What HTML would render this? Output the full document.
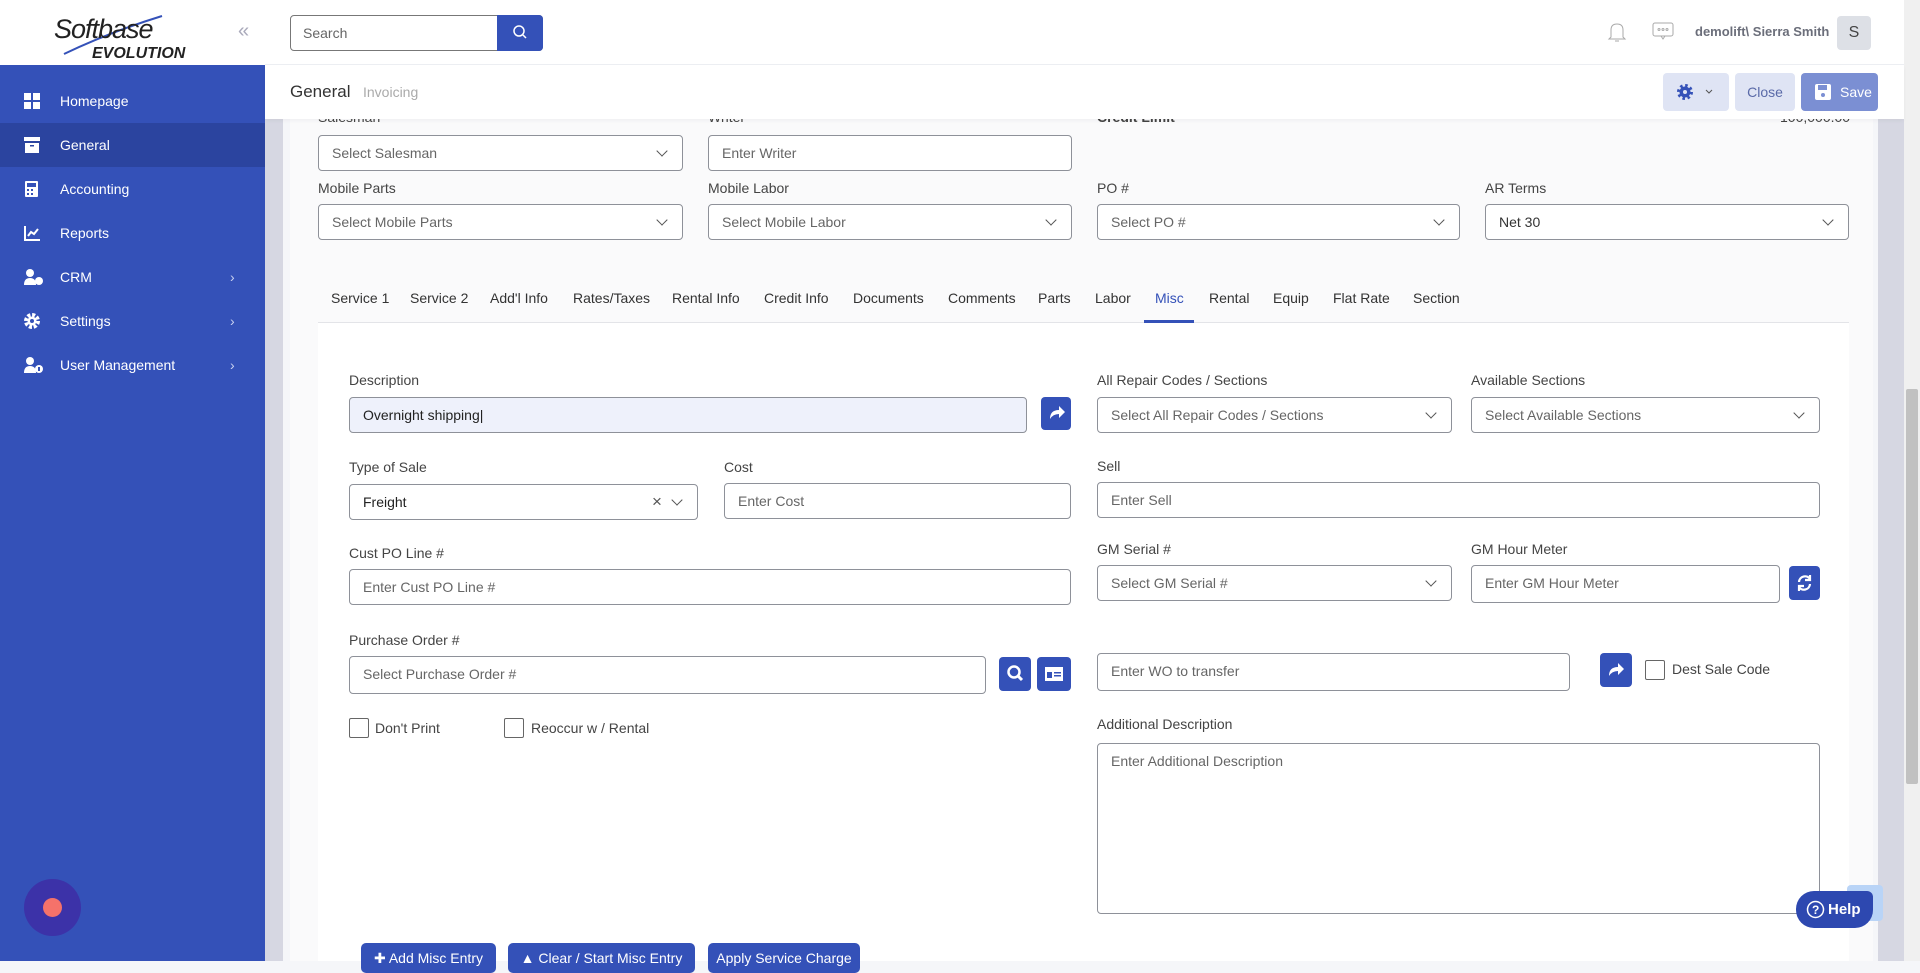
<!DOCTYPE html>
<html><head><meta charset="utf-8">
<style>
*{box-sizing:border-box;margin:0;padding:0}
body{width:1920px;height:961px;overflow:hidden;font-family:"Liberation Sans",sans-serif;background:#f5f6f9;position:relative;color:#3a3d45}
.a{position:absolute}
.side{left:0;top:0;width:265px;height:961px;background:#3451b8}
.logo{left:0;top:0;width:265px;height:65px;background:#fff}
.mi{position:absolute;left:0;width:265px;height:44px;color:#fff;font-size:14px;line-height:44px;padding-left:60px}
.mi svg{position:absolute;left:24px;top:14px}
.mi .ch{position:absolute;left:230px;top:0;font-size:14px;color:#c9d1f0}
.hdr{left:265px;top:0;width:1639px;height:65px;background:#fff;border-bottom:1px solid #eceef3}
.sub{left:265px;top:65px;width:1639px;height:54px;background:#fff;box-shadow:0 2px 4px rgba(0,0,0,.04);z-index:3}
.lab{position:absolute;font-size:14px;color:#444;white-space:nowrap}
.in{position:absolute;height:36px;border:1px solid #8e9199;border-radius:4px;background:#fff;font-size:14px;color:#666;line-height:34px;padding-left:13px;white-space:nowrap}
.sel::after{content:"";position:absolute;right:16px;top:11px;width:7px;height:7px;border-right:1.4px solid #555;border-bottom:1.4px solid #555;transform:rotate(45deg)}
.bb{position:absolute;background:#3451b8;border-radius:4px}
.tab{position:absolute;top:290px;font-size:14px;color:#333;white-space:nowrap}
.cb{position:absolute;width:20px;height:20px;border:1px solid #666;border-radius:2px;background:#fff}
.btn{position:absolute;top:943px;height:30px;background:#3451b8;border-radius:5px;color:#fff;font-size:14px;line-height:30px;text-align:center;white-space:nowrap}
</style></head><body>
<div class="a side"></div>
<div class="a logo">
 <svg class="a" style="left:50px;top:8px" width="160" height="52" viewBox="0 0 160 52">
  <path d="M14 46 Q60 24 112 8" stroke="#3451b8" stroke-width="2" fill="none"/>
  <text x="4" y="30" font-family="Liberation Sans" font-style="italic" font-size="27" fill="#222" letter-spacing="-1">Softbase</text>
  <text x="42" y="50" font-family="Liberation Sans" font-style="italic" font-weight="bold" font-size="16" fill="#222">EVOLUTION</text>
 </svg>
 <div class="a" style="left:238px;top:20px;font-size:20px;color:#aab">«</div>
</div>
<div class="mi" style="top:79px"><svg width="16" height="16"><rect x="0" y="0" width="7" height="7" fill="#fff"/><rect x="9" y="0" width="7" height="7" fill="#fff"/><rect x="0" y="9" width="7" height="7" fill="#fff"/><rect x="9" y="9" width="7" height="7" fill="#fff"/></svg>Homepage</div>
<div class="mi" style="top:123px;background:#2b449f"><svg width="16" height="16"><rect x="0" y="0" width="16" height="4" fill="#fff"/><rect x="1" y="6" width="14" height="10" fill="#fff"/><rect x="6" y="8" width="4" height="1.5" fill="#2b449f"/></svg>General</div>
<div class="mi" style="top:167px"><svg width="16" height="16"><rect x="1" y="0" width="13" height="16" rx="1" fill="#fff"/><rect x="3" y="2" width="9" height="4" fill="#3451b8"/><rect x="3" y="8" width="2" height="2" fill="#3451b8"/><rect x="7" y="8" width="2" height="2" fill="#3451b8"/><rect x="3" y="12" width="2" height="2" fill="#3451b8"/><rect x="7" y="12" width="2" height="2" fill="#3451b8"/></svg>Accounting</div>
<div class="mi" style="top:211px"><svg width="16" height="16"><path d="M1 1V15H16" stroke="#fff" stroke-width="2" fill="none"/><path d="M4 11L7 7L10 9L14 4" stroke="#fff" stroke-width="2" fill="none"/></svg>Reports</div>
<div class="mi" style="top:255px"><svg width="20" height="16"><circle cx="6" cy="4" r="4" fill="#fff"/><path d="M0 16Q0 9 6 9Q12 9 12 16Z" fill="#fff"/><circle cx="15" cy="12" r="4" fill="#fff"/></svg>CRM<span class="ch">›</span></div>
<div class="mi" style="top:299px"><svg width="16" height="16"><circle cx="8" cy="8" r="6" fill="none" stroke="#fff" stroke-width="4" stroke-dasharray="3 1.7"/><circle cx="8" cy="8" r="4.5" fill="#fff"/><circle cx="8" cy="8" r="2" fill="#3451b8"/></svg>Settings<span class="ch">›</span></div>
<div class="mi" style="top:343px"><svg width="20" height="16"><circle cx="6" cy="4" r="4" fill="#fff"/><path d="M0 16Q0 9 6 9Q12 9 12 16Z" fill="#fff"/><circle cx="15" cy="12" r="4" fill="#fff"/><rect x="14" y="10" width="2" height="4" fill="#3451b8"/></svg>User Management<span class="ch">›</span></div>
<div class="a" style="left:24px;top:879px;width:57px;height:57px;border-radius:50%;background:#3c32a8"></div>
<div class="a" style="left:43px;top:898px;width:19px;height:19px;border-radius:50%;background:#f5726a"></div>

<div class="a hdr">
 <div class="a" style="left:25px;top:15px;width:253px;height:36px;border:1px solid #777;border-radius:4px;font-size:14px;color:#666;line-height:34px;padding-left:12px">Search</div>
 <div class="a" style="left:232px;top:15px;width:46px;height:36px;background:#3451b8;border-radius:0 4px 4px 0"><svg width="46" height="36"><circle cx="22" cy="16" r="5" stroke="#fff" stroke-width="1.5" fill="none"/><path d="M26 20L29 23" stroke="#fff" stroke-width="1.5"/></svg></div>
 <svg class="a" style="left:1340px;top:20px" width="24" height="24"><path d="M6 17V10Q6 4 12 4Q18 4 18 10V17L20 19H4Z" stroke="#aaa" fill="none"/><path d="M10 21H14" stroke="#aaa"/></svg>
 <svg class="a" style="left:1387px;top:22px" width="22" height="20"><rect x="1" y="1" width="20" height="13" rx="2" stroke="#aaa" fill="none"/><path d="M9 14L11 17L13 14" stroke="#aaa" fill="none"/><circle cx="7" cy="7.5" r="1" stroke="#aaa" fill="none"/><circle cx="11" cy="7.5" r="1" stroke="#aaa" fill="none"/><circle cx="15" cy="7.5" r="1" stroke="#aaa" fill="none"/></svg>
 <div class="a" style="left:1430px;top:24px;font-size:13px;font-weight:bold;color:#6b6e7a;white-space:nowrap">demolift\ Sierra Smith</div>
 <div class="a" style="left:1572px;top:16px;width:34px;height:34px;background:#dde0e6;border-radius:4px;text-align:center;line-height:34px;font-size:16px;color:#444">S</div>
</div>
<div class="a sub">
 <div class="a" style="left:25px;top:17px;font-size:17px;color:#333">General</div>
 <div class="a" style="left:98px;top:19px;font-size:14px;color:#aaa">Invoicing</div>
 <div class="a" style="left:1398px;top:8px;width:66px;height:38px;background:#dfe4f4;border-radius:4px"><svg width="66" height="38"><circle cx="22" cy="19" r="6.5" fill="none" stroke="#3451b8" stroke-width="3" stroke-dasharray="2.5 2.6"/><circle cx="22" cy="19" r="5.5" fill="#3451b8"/><circle cx="22" cy="19" r="2" fill="#dfe4f4"/><path d="M43 17L46 20L49 17" stroke="#555" fill="none"/></svg></div>
 <div class="a" style="left:1470px;top:8px;width:60px;height:38px;background:#dfe4f4;border-radius:4px;text-align:center;line-height:38px;font-size:14px;color:#5a6aa8">Close</div>
 <div class="a" style="left:1536px;top:8px;width:77px;height:38px;background:#7b8fd3;border-radius:4px;color:#fff;font-size:14px;line-height:38px;padding-left:39px;white-space:nowrap">Save<svg class="a" style="left:14px;top:11px" width="16" height="16"><rect x="0" y="0" width="16" height="16" rx="2" fill="#fff"/><rect x="3" y="1" width="9" height="5" fill="#7b8fd3"/><circle cx="8" cy="11" r="2" fill="#7b8fd3"/></svg></div>
</div>

<!-- content -->
<div class="a" style="left:265px;top:119px;width:18px;height:842px;background:#d6d7e2"></div>
<div class="a" style="left:1878px;top:119px;width:26px;height:842px;background:#d6d7e2"></div>
<div class="a" style="left:1904px;top:0;width:16px;height:961px;background:#f0f0f0"></div>
<div class="a" style="left:1906px;top:389px;width:12px;height:395px;background:#c1c1c1;border-radius:2px"></div>
<div class="a" style="left:290px;top:119px;width:1583px;height:842px;background:#fafafb"></div>

<div class="lab" style="left:318px;top:109px">Salesman</div>
<div class="lab" style="left:708px;top:109px">Writer</div>
<div class="lab" style="left:1097px;top:109px;font-weight:bold">Credit Limit</div>
<div class="lab" style="left:1780px;top:109px">100,000.00</div>
<div class="a" style="left:290px;top:65px;width:1583px;height:54px;background:#fff;z-index:2"></div>
<div class="in sel" style="left:318px;top:135px;width:365px">Select Salesman</div>
<div class="in" style="left:708px;top:135px;width:364px">Enter Writer</div>
<div class="lab" style="left:318px;top:180px">Mobile Parts</div>
<div class="lab" style="left:708px;top:180px">Mobile Labor</div>
<div class="lab" style="left:1097px;top:180px">PO #</div>
<div class="lab" style="left:1485px;top:180px">AR Terms</div>
<div class="in sel" style="left:318px;top:204px;width:365px">Select Mobile Parts</div>
<div class="in sel" style="left:708px;top:204px;width:364px">Select Mobile Labor</div>
<div class="in sel" style="left:1097px;top:204px;width:363px">Select PO #</div>
<div class="in sel" style="left:1485px;top:204px;width:364px;color:#333">Net 30</div>

<div class="tab" style="left:331px">Service 1</div>
<div class="tab" style="left:410px">Service 2</div>
<div class="tab" style="left:490px">Add'l Info</div>
<div class="tab" style="left:573px">Rates/Taxes</div>
<div class="tab" style="left:672px">Rental Info</div>
<div class="tab" style="left:764px">Credit Info</div>
<div class="tab" style="left:853px">Documents</div>
<div class="tab" style="left:948px">Comments</div>
<div class="tab" style="left:1038px">Parts</div>
<div class="tab" style="left:1095px">Labor</div>
<div class="tab" style="left:1155px;color:#3451b8">Misc</div>
<div class="tab" style="left:1209px">Rental</div>
<div class="tab" style="left:1273px">Equip</div>
<div class="tab" style="left:1333px">Flat Rate</div>
<div class="tab" style="left:1413px">Section</div>
<div class="a" style="left:318px;top:322px;width:1531px;height:1px;background:#e3e4e8"></div>
<div class="a" style="left:318px;top:323px;width:1531px;height:638px;background:#fff"></div>
<div class="a" style="left:1144px;top:320px;width:50px;height:3px;background:#3451b8"></div>

<div class="lab" style="left:349px;top:372px">Description</div>
<div class="in" style="left:349px;top:397px;width:678px;background:#eef1fb;color:#222">Overnight shipping|</div>
<div class="bb" style="left:1041px;top:397px;width:30px;height:33px"><svg width="30" height="33"><path d="M9 22Q9 13 18 13V9L24 15L18 21V17Q12 17 9 22Z" fill="#fff"/></svg></div>
<div class="lab" style="left:1097px;top:372px">All Repair Codes / Sections</div>
<div class="lab" style="left:1471px;top:372px">Available Sections</div>
<div class="in sel" style="left:1097px;top:397px;width:355px">Select All Repair Codes / Sections</div>
<div class="in sel" style="left:1471px;top:397px;width:349px">Select Available Sections</div>

<div class="lab" style="left:349px;top:459px">Type of Sale</div>
<div class="lab" style="left:724px;top:459px">Cost</div>
<div class="lab" style="left:1097px;top:458px">Sell</div>
<div class="in sel" style="left:349px;top:484px;width:349px;color:#222">Freight<span class="a" style="left:302px;top:0;color:#555;font-size:17px">×</span></div>
<div class="in" style="left:724px;top:483px;width:347px">Enter Cost</div>
<div class="in" style="left:1097px;top:482px;width:723px">Enter Sell</div>

<div class="lab" style="left:349px;top:545px">Cust PO Line #</div>
<div class="lab" style="left:1097px;top:541px">GM Serial #</div>
<div class="lab" style="left:1471px;top:541px">GM Hour Meter</div>
<div class="in" style="left:349px;top:569px;width:722px">Enter Cust PO Line #</div>
<div class="in sel" style="left:1097px;top:565px;width:355px">Select GM Serial #</div>
<div class="in" style="left:1471px;top:565px;width:309px;height:38px">Enter GM Hour Meter</div>
<div class="bb" style="left:1789px;top:566px;width:31px;height:34px"><svg width="31" height="34"><path d="M10 16A6 6 0 0 1 21 13M21 9V14H16M21 18A6 6 0 0 1 10 21M10 25V20H15" stroke="#fff" stroke-width="2.2" fill="none"/></svg></div>

<div class="lab" style="left:349px;top:632px">Purchase Order #</div>
<div class="in" style="left:349px;top:656px;width:637px;height:38px">Select Purchase Order #</div>
<div class="bb" style="left:999px;top:657px;width:32px;height:34px"><svg width="32" height="34"><circle cx="15" cy="15" r="5.5" stroke="#fff" stroke-width="2.5" fill="none"/><path d="M19 19L23 23" stroke="#fff" stroke-width="3"/></svg></div>
<div class="bb" style="left:1037px;top:657px;width:34px;height:34px"><svg width="34" height="34"><rect x="8" y="10" width="18" height="14" fill="#fff"/><rect x="10" y="15" width="5" height="6" fill="#3451b8"/><rect x="17" y="15" width="7" height="1.5" fill="#3451b8"/><rect x="17" y="18" width="7" height="1.5" fill="#3451b8"/></svg></div>
<div class="in" style="left:1097px;top:653px;width:473px;height:38px">Enter WO to transfer</div>
<div class="bb" style="left:1600px;top:653px;width:32px;height:34px"><svg width="32" height="34"><path d="M9 23Q9 14 18 14V10L24 16L18 22V18Q12 18 9 23Z" fill="#fff"/></svg></div>
<div class="cb" style="left:1645px;top:660px"></div>
<div class="lab" style="left:1672px;top:661px">Dest Sale Code</div>

<div class="cb" style="left:349px;top:718px"></div>
<div class="lab" style="left:375px;top:720px">Don't Print</div>
<div class="cb" style="left:504px;top:718px"></div>
<div class="lab" style="left:531px;top:720px">Reoccur w / Rental</div>
<div class="lab" style="left:1097px;top:716px">Additional Description</div>
<div class="in" style="left:1097px;top:743px;width:723px;height:171px;line-height:normal;padding-top:9px">Enter Additional Description</div>

<div class="btn" style="left:361px;width:135px">✚ Add Misc Entry</div>
<div class="btn" style="left:508px;width:187px">▲ Clear / Start Misc Entry</div>
<div class="btn" style="left:708px;width:152px">Apply Service Charge</div>

<div class="a" style="left:1847px;top:885px;width:36px;height:36px;background:#b9d4f7;border-radius:4px"></div>
<div class="a" style="left:1796px;top:891px;width:77px;height:37px;background:#2d48b0;border-radius:18px 6px 18px 18px;color:#fff;font-weight:bold;font-size:15px;line-height:37px;padding-left:32px">Help<svg class="a" style="left:10px;top:9px" width="19" height="19"><circle cx="9.5" cy="9.5" r="8" stroke="#fff" stroke-width="1.5" fill="none"/><text x="6" y="14" font-size="12" fill="#fff" font-family="Liberation Sans">?</text></svg></div>
</body></html>
